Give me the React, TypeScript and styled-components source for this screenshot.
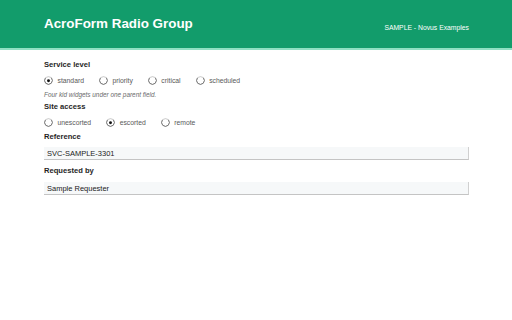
import React from 'react';
import styled, { createGlobalStyle } from 'styled-components';

const GlobalStyle = createGlobalStyle`
  html, body {
    margin: 0;
    padding: 0;
    background: #ffffff;
    font-family: 'Liberation Sans', Arial, sans-serif;
  }
`;

const Header = styled.header`
  height: 48px;
  background-color: #129c6b;
  border-bottom: 2px solid #8fe0c3;
  padding: 0 43px 0 44px;
  display: flex;
  align-items: center;
  justify-content: space-between;
  color: #ffffff;
`;

const Title = styled.h1`
  margin: 0 0 2px 0;
  font-size: 13.4px;
  font-weight: 700;
`;

const Subtitle = styled.span`
  font-size: 6.8px;
  margin-top: 6px;
`;

const Main = styled.main`
  padding: 10px 43px 0 44px;
  display: flex;
  flex-direction: column;
`;

const Label = styled.div<{ $gap?: number }>`
  font-size: 7.6px;
  line-height: 10px;
  font-weight: 700;
  color: #1f1f1f;
  margin-top: ${(p) => p.$gap ?? 0}px;
`;

const RadioRow = styled.div<{ $gap: number }>`
  display: flex;
  align-items: center;
  gap: 15px;
  height: 12px;
  margin-top: ${(p) => p.$gap}px;
`;

const RadioItem = styled.label`
  display: flex;
  align-items: center;
  gap: 4.5px;
  font-size: 6.8px;
  color: #595959;
`;

const Note = styled.div`
  font-size: 6.4px;
  line-height: 8px;
  font-style: italic;
  color: #6b6b6b;
  margin-top: 5px;
`;

const Field = styled.div<{ $gap: number }>`
  height: 12px;
  margin-top: ${(p) => p.$gap}px;
  background: #f6f8f9;
  border-bottom: 1.5px solid #c4c4c4;
  border-right: 1px solid #d0d0d0;
  padding-left: 3px;
  display: flex;
  align-items: center;
  font-size: 7.5px;
  color: #222222;
`;

const Radio: React.FC<{ checked?: boolean }> = ({ checked }) => (
  <svg width="9" height="9" viewBox="0 0 10 10">
    <circle cx="5" cy="5" r="4.3" fill="#ffffff" stroke="#b5b5b5" strokeWidth="0.8" />
    <path d="M8.2 2.1 A4.3 4.3 0 1 1 1.6 2.2" fill="none" stroke="#6a6a6a" strokeWidth="0.9" />
    {checked && <circle cx="5" cy="5.3" r="1.6" fill="#111111" />}
  </svg>
);

type Option = { label: string; checked?: boolean };

const serviceLevels: Option[] = [
  { label: 'standard', checked: true },
  { label: 'priority' },
  { label: 'critical' },
  { label: 'scheduled' },
];

const siteAccess: Option[] = [
  { label: 'unescorted' },
  { label: 'escorted', checked: true },
  { label: 'remote' },
];

const RadioGroup: React.FC<{ options: Option[]; gap: number }> = ({ options, gap }) => (
  <RadioRow $gap={gap}>
    {options.map((o) => (
      <RadioItem key={o.label}>
        <Radio checked={o.checked} />
        {o.label}
      </RadioItem>
    ))}
  </RadioRow>
);

const App: React.FC = () => (
  <>
    <GlobalStyle />
    <Header>
      <Title>AcroForm Radio Group</Title>
      <Subtitle>SAMPLE - Novus Examples</Subtitle>
    </Header>
    <Main>
      <Label>Service level</Label>
      <RadioGroup options={serviceLevels} gap={4} />
      <Note>Four kid widgets under one parent field.</Note>
      <Label $gap={3}>Site access</Label>
      <RadioGroup options={siteAccess} gap={4} />
      <Label $gap={4}>Reference</Label>
      <Field $gap={5}>SVC-SAMPLE-3301</Field>
      <Label $gap={6}>Requested by</Label>
      <Field $gap={6}>Sample Requester</Field>
    </Main>
  </>
);

export default App;
